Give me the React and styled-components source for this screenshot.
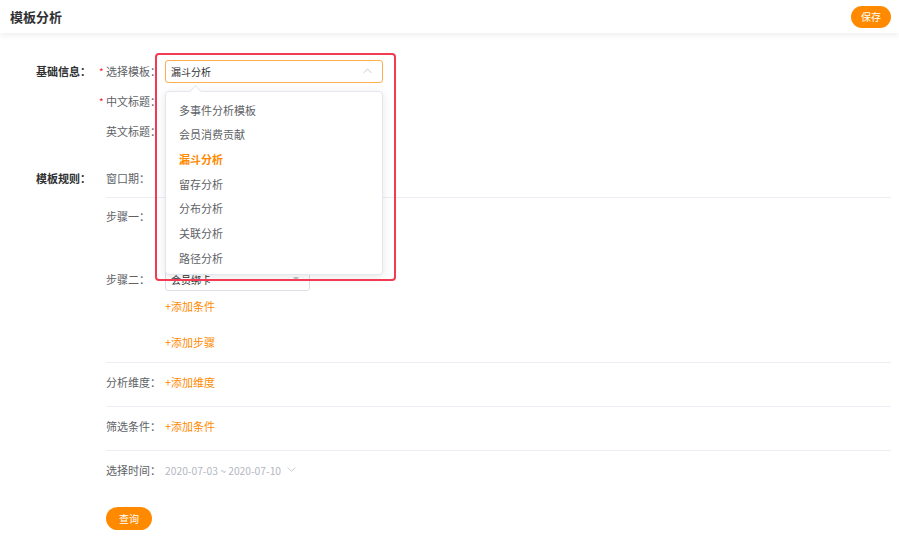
import React from 'react';
import styled, { createGlobalStyle } from 'styled-components';

const GlobalStyle = createGlobalStyle`
  body {
    margin: 0;
    background: #fff;
    font-family: "Noto Sans CJK SC", "Noto Sans", sans-serif;
    color: #333;
  }
`;

const ORANGE = '#ff8a00';

const Header = styled.header`
  height: 33px;
  display: flex;
  align-items: center;
  justify-content: space-between;
  padding: 0 8px 0 10px;
  background: #fff;
  box-shadow: 0 2px 6px rgba(0, 0, 0, 0.07);
  position: relative;
  z-index: 1;
`;

const Title = styled.h1`
  margin: 0;
  font-size: 13px;
  font-weight: 600;
  color: #303133;
`;

const PillButton = styled.button`
  border: none;
  background: ${ORANGE};
  color: #fff;
  font-family: inherit;
  font-size: 10px;
  width: ${p => p.$w}px;
  height: ${p => p.$h}px;
  border-radius: ${p => p.$h / 2}px;
  padding: 0;
  cursor: pointer;
`;

const Body = styled.main`
  padding: 23px 8px 0 36px;
`;

const Section = styled.section`
  display: grid;
  grid-template-columns: 70px 1fr;
  margin-bottom: ${p => p.$mb || 0}px;
`;

const SectionLabel = styled.div`
  font-size: 11px;
  font-weight: 600;
  color: #303133;
  line-height: 30px;
  height: 30px;
`;

const Row = styled.div`
  display: flex;
  align-items: center;
  height: ${p => p.$h || 30}px;
`;

const Label = styled.label`
  width: 59px;
  flex: none;
  font-size: 11px;
  color: #606266;
  white-space: nowrap;
`;

const Star = styled.span`
  color: #f5222d;
  display: inline-block;
  width: 7px;
  margin-left: -7px;
  font-size: 10px;
`;

const SelectWrap = styled.div`
  position: relative;
`;

const SelectBox = styled.div`
  box-sizing: border-box;
  width: ${p => p.$w}px;
  height: ${p => p.$h}px;
  border: 1px solid ${p => (p.$active ? '#ffad4d' : '#dcdfe6')};
  border-radius: 3px;
  display: flex;
  align-items: center;
  justify-content: space-between;
  padding: 0 10px 0 5px;
  font-size: 10px;
  color: #303133;
  background: #fff;
`;

const Dropdown = styled.ul`
  position: absolute;
  top: 31px;
  left: 0;
  width: 218px;
  box-sizing: border-box;
  margin: 0;
  padding: 6px 0 4px;
  list-style: none;
  background: #fff;
  border: 1px solid #e4e7ed;
  border-radius: 4px;
  box-shadow: 0 2px 10px rgba(0, 0, 0, 0.1);
  z-index: 5;

  &::before {
    content: '';
    position: absolute;
    top: -5px;
    left: 25px;
    width: 8px;
    height: 8px;
    background: #fff;
    border-left: 1px solid #e4e7ed;
    border-top: 1px solid #e4e7ed;
    transform: rotate(45deg);
  }
`;

const Option = styled.li`
  height: 24.7px;
  line-height: 24.7px;
  padding-left: 13px;
  font-size: 11px;
  color: ${p => (p.$selected ? ORANGE : '#606266')};
  font-weight: ${p => (p.$selected ? 600 : 400)};
`;

const Highlight = styled.div`
  position: absolute;
  left: -10px;
  top: -7px;
  width: 241px;
  height: 228px;
  box-sizing: border-box;
  border: 2px solid #f23a52;
  border-radius: 4px;
  z-index: 6;
  pointer-events: none;
`;

const Rules = styled.div`
  display: flex;
  flex-direction: column;
`;

const Block = styled.div`
  padding: ${p => p.$pad};
  border-bottom: ${p => (p.$last ? 'none' : '1px solid #ebeef5')};
`;

const Step = styled.div`
  display: flex;
  margin-bottom: ${p => p.$mb || 0}px;
`;

const StepLabel = styled(Label)`
  line-height: 24px;
  height: 24px;
`;

const StepBody = styled.div`
  display: flex;
  flex-direction: column;
  gap: 6px;
`;

/* area covered by the open dropdown in the screenshot */
const HiddenSpace = styled.div`
  width: 145px;
  height: 48px;
`;

const AddLink = styled.a`
  font-size: 11px;
  color: ${ORANGE};
  line-height: 18px;
  cursor: pointer;
`;

const DateText = styled.span`
  font-size: 10.3px;
  color: #b4b8c0;
  display: flex;
  align-items: center;
  gap: 6px;
`;

const Caret = styled.span`
  width: 0;
  height: 0;
  border-left: 3px solid transparent;
  border-right: 3px solid transparent;
  border-top: 4px solid #c0c4cc;
`;

const Footer = styled.div`
  padding: 22px 0 0 70px;
`;

const Chevron = ({ up, color = '#c0c4cc', size = 9 }) => (
  <svg width={size} height={size * 0.6} viewBox="0 0 10 6" fill="none">
    <path
      d={up ? 'M1 5.2L5 1.2l4 4' : 'M1 0.8l4 4 4-4'}
      stroke={color}
      strokeWidth="1"
      strokeLinecap="round"
      strokeLinejoin="round"
    />
  </svg>
);

const templates = ['多事件分析模板', '会员消费贡献', '漏斗分析', '留存分析', '分布分析', '关联分析', '路径分析'];

export default function App() {
  return (
    <>
      <GlobalStyle />
      <Header>
        <Title>模板分析</Title>
        <PillButton $w={40} $h={22}>保存</PillButton>
      </Header>
      <Body>
        <Section $mb={17}>
          <SectionLabel>基础信息：</SectionLabel>
          <div>
            <Row>
              <Label><Star>*</Star>选择模板：</Label>
              <SelectWrap>
                <SelectBox $w={218} $h={23} $active>
                  <span>漏斗分析</span>
                  <Chevron up />
                </SelectBox>
                <Dropdown>
                  {templates.map(t => (
                    <Option key={t} $selected={t === '漏斗分析'}>{t}</Option>
                  ))}
                </Dropdown>
                <Highlight />
              </SelectWrap>
            </Row>
            <Row>
              <Label><Star>*</Star>中文标题：</Label>
            </Row>
            <Row>
              <Label>英文标题：</Label>
            </Row>
          </div>
        </Section>
        <Section>
          <SectionLabel>模板规则：</SectionLabel>
          <Rules>
            <Block $pad="0 0 4px">
              <Row>
                <Label>窗口期：</Label>
              </Row>
            </Block>
            <Block $pad="6px 0 11px">
              <Step $mb={15}>
                <StepLabel>步骤一：</StepLabel>
                <HiddenSpace />
              </Step>
              <Step $mb={18}>
                <StepLabel>步骤二：</StepLabel>
                <StepBody>
                  <SelectBox $w={145} $h={24}>
                    <span>会员绑卡</span>
                    <Caret />
                  </SelectBox>
                  <AddLink>+添加条件</AddLink>
                </StepBody>
              </Step>
              <Row $h={18}>
                <Label />
                <AddLink>+添加步骤</AddLink>
              </Row>
            </Block>
            <Block $pad="7px 0 12px">
              <Row $h={24}>
                <Label>分析维度：</Label>
                <AddLink>+添加维度</AddLink>
              </Row>
            </Block>
            <Block $pad="7px 0 12px">
              <Row $h={24}>
                <Label>筛选条件：</Label>
                <AddLink>+添加条件</AddLink>
              </Row>
            </Block>
            <Block $pad="7px 0 0" $last>
              <Row $h={24}>
                <Label>选择时间：</Label>
                <DateText>
                  2020-07-03 ~ 2020-07-10
                  <Chevron />
                </DateText>
              </Row>
            </Block>
          </Rules>
        </Section>
        <Footer>
          <PillButton $w={46} $h={23}>查询</PillButton>
        </Footer>
      </Body>
    </>
  );
}
